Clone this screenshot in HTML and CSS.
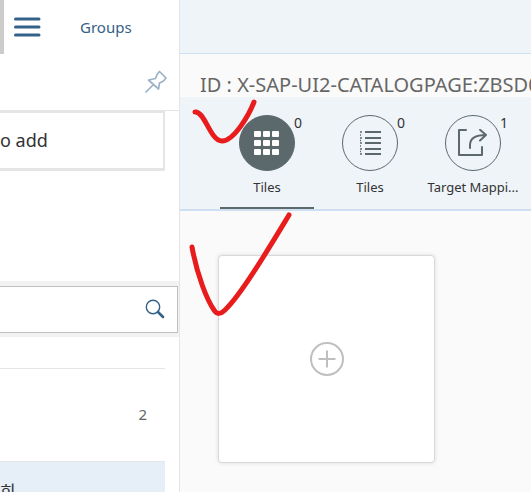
FILE: index.html
```html
<!DOCTYPE html>
<html lang="en">
<head>
<meta charset="utf-8">
<title>Catalog designer</title>
<link rel="stylesheet" href="styles.css">
</head>
<body>
<div class="app">
  <aside class="side">
    <nav class="side-nav">
      <button class="icon-button menu" aria-label="Menu">
        <svg width="28" height="20" viewBox="0 0 28 20"><path d="M2.500 2H26M2.500 10H26M2.500 18H26" stroke="#346187" stroke-width="3" stroke-linecap="round"/></svg>
      </button>
      <a class="groups" href="#groups">Groups</a>
    </nav>
    <div class="pin-row">
      <button class="icon-button" aria-label="Pin">
        <svg width="24" height="24" viewBox="0 0 24 24" fill="none" stroke="#9bb2c7" stroke-width="1.700" stroke-linejoin="round" stroke-linecap="round"><path d="M15.500 1.500L22 8L19.500 11L15.500 13L14.500 19L4.500 10L11.500 8.500L13 4.500ZM9.500 14.500L2 22"/></svg>
      </button>
    </div>
    <div class="drop-zone">o add</div>
    <form class="search">
      <input class="search-input" type="search" aria-label="Search catalogs">
      <button class="icon-button search-button" type="button" aria-label="Search">
        <svg width="20" height="20" viewBox="0 0 20 20" fill="none" stroke="#346187"><circle cx="8" cy="8" r="6.700" stroke-width="1.400"/><path d="M13 13L18 18" stroke-width="2.600" stroke-linecap="round"/></svg>
      </button>
    </form>
    <ul class="catalogs">
      <li class="catalog"><span class="count">2</span></li>
      <li class="catalog selected"><span class="name">회</span></li>
    </ul>
  </aside>
  <main class="main">
    <header class="topbar"></header>
    <h1 class="title">ID : X-SAP-UI2-CATALOGPAGE:ZBSD0</h1>
    <div class="tabs" role="tablist">
      <button class="tab active" role="tab" aria-selected="true">
        <span class="disc"><svg width="26" height="26" viewBox="0 0 26 26" fill="#fff"><rect x="0" y="1" width="7" height="6" rx="1"/><rect x="9" y="1" width="7" height="6" rx="1"/><rect x="18" y="1" width="7" height="6" rx="1"/><rect x="0" y="10" width="7" height="6" rx="1"/><rect x="9" y="10" width="7" height="6" rx="1"/><rect x="18" y="10" width="7" height="6" rx="1"/><rect x="0" y="19" width="7" height="6" rx="1"/><rect x="9" y="19" width="7" height="6" rx="1"/><rect x="18" y="19" width="7" height="6" rx="1"/></svg><span class="badge">0</span></span>
        <span class="label">Tiles</span>
      </button>
      <button class="tab" role="tab" aria-selected="false">
        <span class="disc"><svg width="24" height="26" viewBox="0 0 24 26" fill="none" stroke="#5b696c" stroke-width="2"><path d="M7 2H23M7 8H23M7 13H23M7 19H23M7 24H23"/><path d="M2 2H4M2 8H4M2 13H4M2 19H4M2 24H4M2 5H3M2 10.500H3M2 16H3M2 21.500H3" stroke-width="1.500"/></svg><span class="badge">0</span></span>
        <span class="label">Tiles</span>
      </button>
      <button class="tab" role="tab" aria-selected="false">
        <span class="disc"><svg width="30" height="28" viewBox="0 0 30 28" fill="none" stroke="#5b696c" stroke-width="2" stroke-linecap="round" stroke-linejoin="round"><path d="M8 1H1V26H24V18"/><path d="M12 19V16C12 10 17 6 28 6M22 0.800L28 6L22 11.500"/></svg><span class="badge">1</span></span>
        <span class="label">Target Mappi...</span>
      </button>
    </div>
    <section class="tiles">
      <button class="add-tile" aria-label="Add tile">
        <svg width="36" height="36" viewBox="0 0 36 36" fill="none" stroke="#bfbfbf" stroke-width="2"><circle cx="18" cy="18" r="16"/><path d="M9.500 18H26.500M18 9.500V26.500"/></svg>
      </button>
    </section>
  </main>
  <svg class="marks" width="120" height="230" viewBox="0 0 120 230" fill="none" stroke="#e81c1c" stroke-width="5" stroke-linecap="round" stroke-linejoin="round" aria-hidden="true">
    <path d="M10 22C20 21 25 51 37 51C49 51 64 25 69 12"/>
    <path d="M7 157C12 185 22 210 29 220C32 225 36 224 40 220C56 205 84 158 104 125"/>
  </svg>
</div>
</body>
</html>
```

FILE: styles.css
```css
* { box-sizing: border-box; }

body {
  margin: 0;
  background: #fafafa;
  color: #333;
  font-family: "Noto Sans", "Noto Sans CJK KR", sans-serif;
  font-size: 14px;
  overflow: hidden;
}

button {
  padding: 0;
  border: 0;
  background: none;
  color: inherit;
  font: inherit;
}

svg { display: block; }

.app {
  position: relative;
  display: flex;
  height: 100vh;
}

/* Side panel */
.side {
  flex: 0 0 180px;
  overflow: hidden;
  border-right: 1px solid #e5e5e5;
  background: #fff;
}

.side-nav {
  display: flex;
  align-items: center;
  height: 54px;
  gap: 39px;
  padding-left: 9px;
  border-left: 4px solid #ccc;
}

.groups {
  color: #346187;
  font-size: 15px;
  line-height: 20px;
  text-decoration: none;
}

.pin-row {
  display: flex;
  align-items: center;
  justify-content: flex-end;
  height: 57px;
  padding-right: 11px;
  border-bottom: 1px solid #e5e5e5;
}

.drop-zone {
  display: flex;
  align-items: center;
  height: 60px;
  margin: 0 14px 110px 0;
  padding-bottom: 2px;
  border: 2px solid #e5e5e5;
  border-bottom-width: 3px;
  border-left: 0;
  font-size: 18px;
}

.search {
  display: flex;
  position: relative;
  padding: 5px 1px 4px 0;
  background: #f2f2f2;
}

.search-input {
  flex: 1;
  min-width: 0;
  height: 47px;
  border: 1px solid #bfbfbf;
  border-left: 0;
  background: #fff;
}

.search-button {
  position: absolute;
  top: 18px;
  right: 14px;
}

.catalogs {
  margin: 31px 14px 0 0;
  padding: 0;
  list-style: none;
}

.catalog {
  display: flex;
  align-items: center;
  height: 93px;
  padding: 0 18px 2px 0;
  border-top: 1px solid #e5e5e5;
}

.count {
  margin-left: auto;
  color: #666;
  font-size: 15px;
}

.selected {
  align-items: flex-start;
  padding-top: 16px;
  background: #e6eef7;
}

.name { font-size: 17px; }

/* Main area */
.main {
  flex: 1;
  min-width: 0;
}

.topbar {
  height: 54px;
  border-bottom: 1px solid #cddff0;
  background: #eff4f9;
}

.title {
  height: 43px;
  margin: 0;
  padding: 16px 0 0 20px;
  overflow: hidden;
  color: #666;
  font-size: 20px;
  font-weight: 400;
  line-height: 30px;
  white-space: nowrap;
}

.tabs {
  display: flex;
  gap: 9px;
  height: 114px;
  padding: 18px 0 0 40px;
  border-bottom: 2px solid #cddff0;
  background: #eff4f9;
}

.tab {
  display: flex;
  flex: 0 0 94px;
  flex-direction: column;
  align-items: center;
  gap: 6px;
  border-bottom: 2px solid transparent;
}

.active { border-color: #5b696c; }

.disc {
  position: relative;
  display: grid;
  place-items: center;
  width: 56px;
  height: 56px;
  border: 1px solid #5b696c;
  border-radius: 50%;
}

.active .disc { background: #5b696c; }

.badge {
  position: absolute;
  top: -3px;
  left: 100%;
  line-height: 20px;
}

.label {
  font-size: 13px;
  line-height: 20px;
  white-space: nowrap;
}

.tiles { padding: 44px 38px; }

.add-tile {
  display: grid;
  place-items: center;
  width: 217px;
  height: 208px;
  border: 1px solid #d9d9d9;
  border-radius: 4px;
  background: #fff;
  box-shadow: 0 0 4px rgba(0, 0, 0, 0.12);
}

/* Pen marks drawn over the page */
.marks {
  position: absolute;
  top: 90px;
  left: 185px;
  pointer-events: none;
}
```
